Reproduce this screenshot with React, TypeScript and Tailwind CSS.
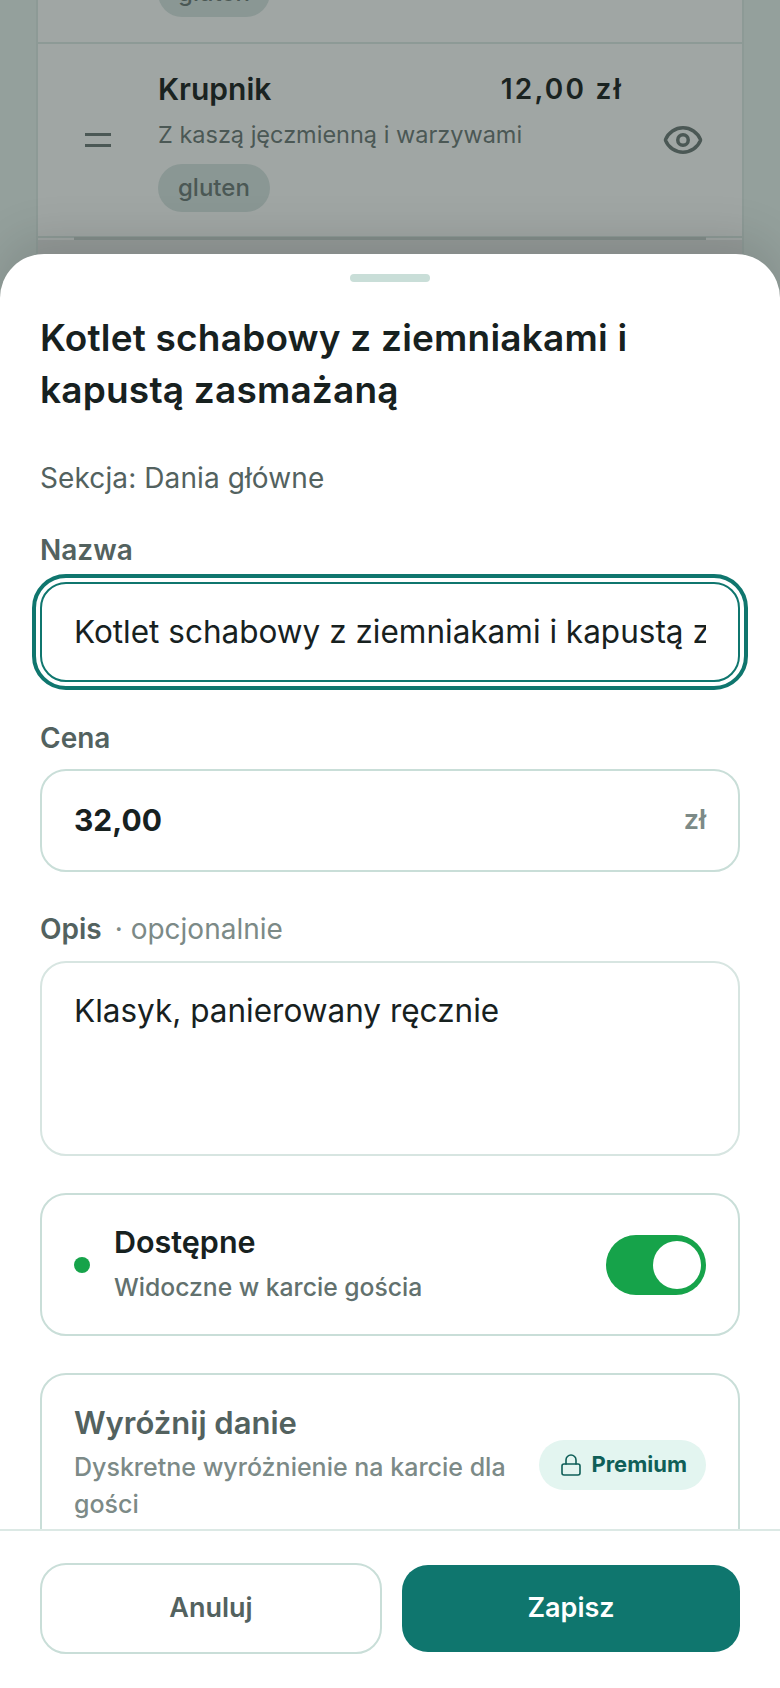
import { Eye, Lock } from 'lucide-react';

function Label({ children }: { children: React.ReactNode }) {
  return <div className="text-[28px] leading-[36px] font-semibold text-[#53625f]">{children}</div>;
}

export default function App() {
  return (
    <div className="relative h-[1688px] w-[780px] overflow-hidden bg-[#94a09c] font-['Inter',sans-serif]">
      {/* page behind the sheet */}
      <div className="mx-[36px] -mt-[4px] border-x-2 border-[#8d9a96] bg-[#a0a6a4]">
        <div className="flex h-[48px] items-start border-b-2 border-[#8d9a96] pl-[120px]">
          <div className="-mt-[27px] flex h-[48px] w-[112px] items-center justify-center rounded-full bg-[#8a9794] text-[24px] font-medium text-[#4b5855]">gluten</div>
        </div>
        <div className="flex h-[194px] items-center border-b-2 border-[#8d9a96]">
          <div className="flex w-[120px] justify-center">
            <div className="h-[14px] w-[26px] border-y-[3px] border-[#4b5855]" />
          </div>
          <div className="w-[465px] pt-[2px]">
            <div className="flex items-center justify-between">
              <span className="text-[30px] leading-[36px] font-semibold text-[#1a2321]">Krupnik</span>
              <span className="text-[28px] leading-[36px] font-semibold tracking-[2.2px] text-[#1a2321]">12,00 zł</span>
            </div>
            <div className="mt-[12px] text-[23.5px] leading-[32px] text-[#4b5855]">Z kaszą jęczmienną i warzywami</div>
            <div className="mt-[13px] inline-block rounded-full bg-[#8a9794] px-[20px] py-[8px] text-[24px] leading-[32px] font-medium text-[#4b5855]">gluten</div>
          </div>
          <div className="flex flex-1 justify-center">
            <Eye size={42} strokeWidth={2} className="text-[#4b5855]" />
          </div>
        </div>
        <div className="mx-[36px] -mt-[1px] h-[3px] bg-[#828d8a]" />
        <div className="h-[40px] bg-[#959b99]" />
      </div>

      <div className="absolute inset-x-0 bottom-0 flex h-[1434px] flex-col rounded-t-[44px] bg-white shadow-[0_-16px_48px_rgba(0,0,0,0.12)]">
        <div className="flex-1 overflow-hidden px-[40px]">
          <div className="mx-auto mt-[20px] h-[8px] w-[80px] rounded-full bg-[#c9ded8]" />
          <h2 className="mt-[30px] text-[37px] leading-[52px] font-semibold tracking-[0.2px] text-[#17211f]">Kotlet schabowy z ziemniakami i kapustą zasmażaną</h2>
          <div className="mt-[44px] text-[28px] leading-[36px] tracking-[0.1px] text-[#53625f]">Sekcja: Dania główne</div>

          <div className="mt-[36px]"><Label>Nazwa</Label></div>
          <div className="mt-[14px] flex h-[100px] items-center rounded-[26px] border-2 border-[#0f766e] px-[32px] outline-[4px] outline-offset-[4px] outline-[#0f766e]">
            <input readOnly value="Kotlet schabowy z ziemniakami i kapustą zasmażaną" className="w-full bg-transparent text-[31.5px] text-[#17211f] outline-none" />
          </div>

          <div className="mt-[38px]"><Label>Cena</Label></div>
          <div className="mt-[13px] flex h-[103px] items-center justify-between rounded-[26px] border-2 border-[#c9ded8] px-[32px]">
            <span className="text-[30px] font-bold text-[#17211f]">32,00</span>
            <span className="text-[27px] font-semibold text-[#7c8a87]">zł</span>
          </div>

          <div className="mt-[39px] flex items-center gap-[13px]">
            <Label>Opis</Label>
            <span className="text-[28px] leading-[36px] text-[#7c8a87]">· opcjonalnie</span>
          </div>
          <div className="mt-[14px] h-[195px] rounded-[26px] border-2 border-[#d7e5e1] px-[32px] py-[26px] text-[31.5px] leading-[44px] text-[#17211f]">Klasyk, panierowany ręcznie</div>

          <div className="mt-[37px] flex h-[143px] items-center rounded-[26px] border-2 border-[#c9ded8] px-[32px]">
            <div className="h-[16px] w-[16px] rounded-full bg-[#16a34a]" />
            <div className="ml-[24px] flex-1">
              <div className="-mt-[4px] text-[30.5px] leading-[40px] font-semibold text-[#17211f]">Dostępne</div>
              <div className="mt-[8px] text-[24.7px] leading-[34px] font-medium text-[#62716e]">Widoczne w karcie gościa</div>
            </div>
            <div className="flex h-[60px] w-[100px] items-center justify-end rounded-full bg-[#16a34a] pr-[5px]">
              <div className="h-[48px] w-[48px] rounded-full bg-white" />
            </div>
          </div>

          <div className="mt-[37px] flex items-center rounded-t-[26px] border-2 border-[#c9ded8] px-[32px] pt-[28px] pb-[40px]">
            <div className="flex-1">
              <div className="text-[31px] leading-[40px] font-semibold text-[#53625f]">Wyróżnij danie</div>
              <div className="mt-[6px] w-[440px] text-[25px] leading-[37px] font-medium text-[#7c8a87]">Dyskretne wyróżnienie na karcie dla gości</div>
            </div>
            <div className="mt-[3px] flex h-[50px] items-center gap-[8px] rounded-full bg-[#e3f5f0] pr-[19px] pl-[20px] text-[22px] font-bold text-[#0f5f58]">
              <Lock size={24} strokeWidth={1.6} />
              Premium
            </div>
          </div>
        </div>

        <div className="flex h-[159px] gap-[20px] border-t-2 border-[#dce9e5] bg-white px-[40px] pt-[32px]">
          <button className="h-[91px] w-[342px] rounded-[26px] border-2 border-[#c9ded8] text-[27px] font-semibold text-[#53625f]">Anuluj</button>
          <button className="h-[87px] flex-1 translate-y-[2px] rounded-[26px] bg-[#0f766e] text-[27px] font-semibold text-white">Zapisz</button>
        </div>
      </div>
    </div>
  );
}
